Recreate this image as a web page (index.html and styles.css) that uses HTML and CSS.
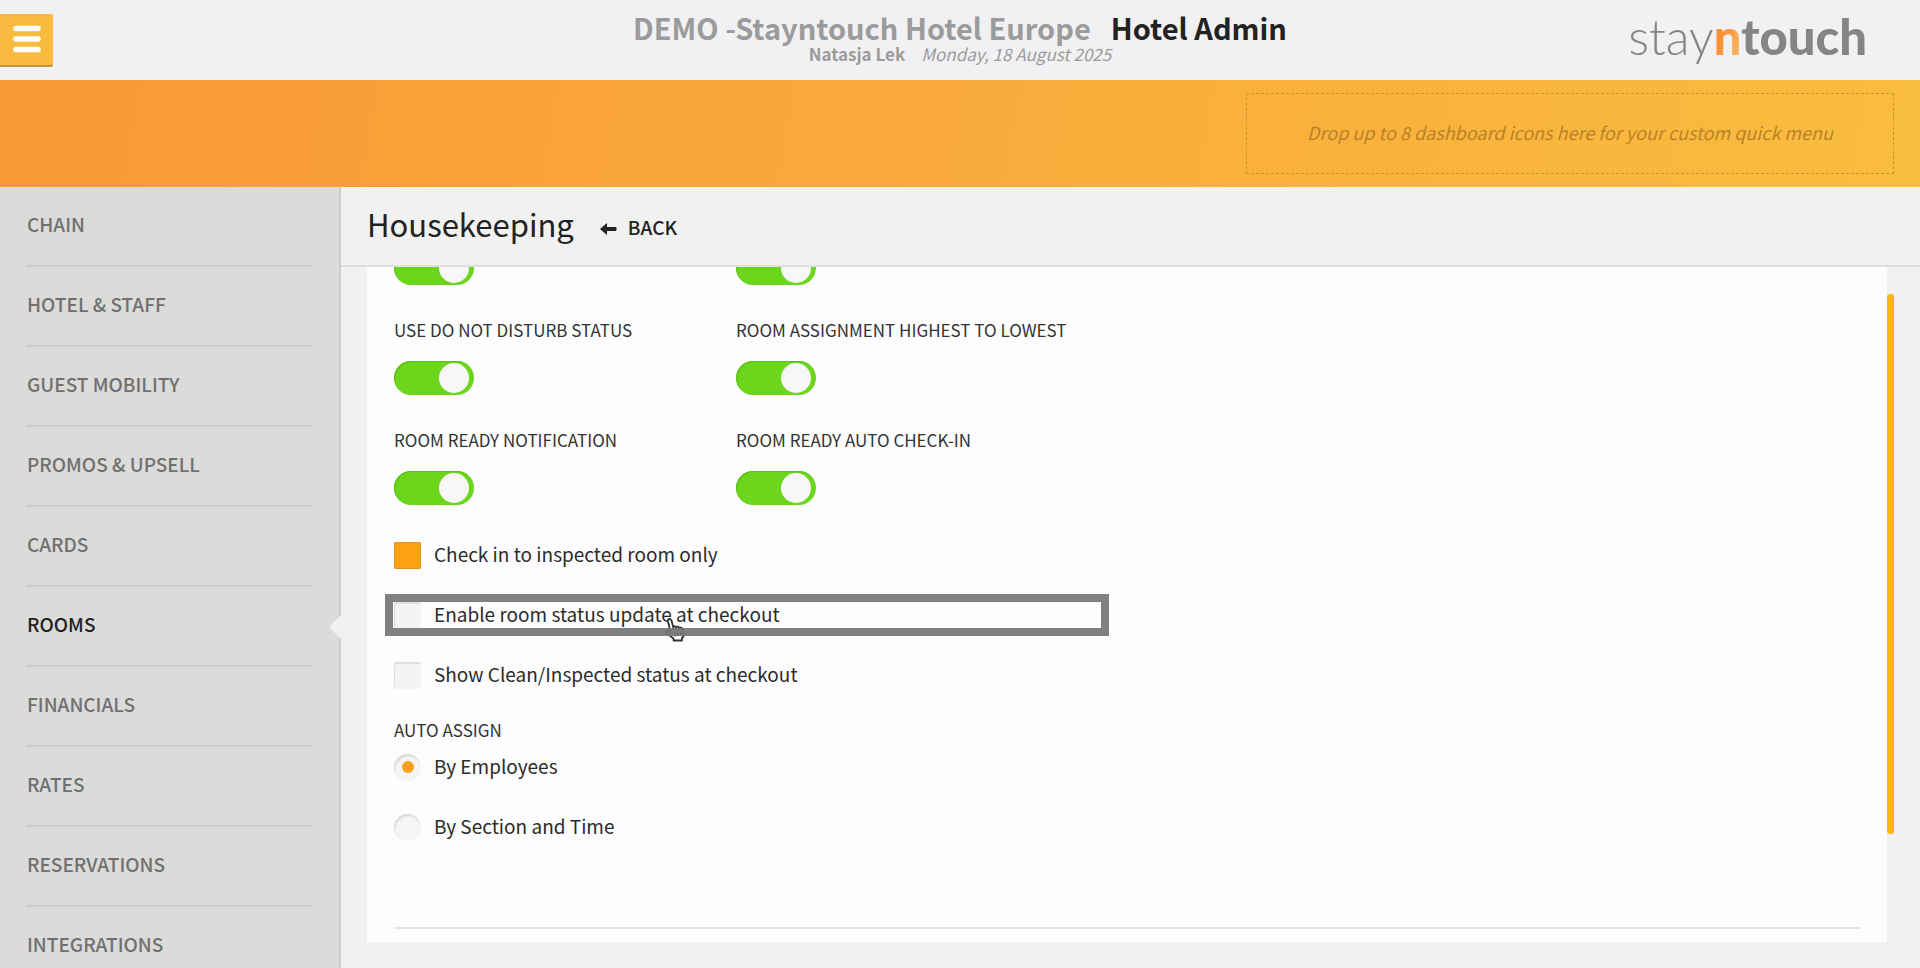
FILE: index.html
```html
<!DOCTYPE html>
<html lang="en">
<head>
<meta charset="utf-8">
<title>Hotel Admin</title>
<link rel="stylesheet" href="styles.css">
</head>
<body>
<div class="app">
  <header class="top">
    <button class="menu-btn" type="button" aria-label="Open menu">
      <svg width="28" height="28" viewBox="0 0 28 28" aria-hidden="true"><path d="M3 3.500h22M3 14h22M3 24.500h22" stroke="#fff" stroke-width="5.500" stroke-linecap="round"/></svg>
    </button>
    <div class="headline">
      <h1 class="hotel"><span class="hotel-name">DEMO -Stayntouch Hotel Europe</span><span>Hotel Admin</span></h1>
      <p class="meta"><b>Natasja Lek</b><i>Monday, 18 August 2025</i></p>
    </div>
    <div class="logo"><span class="logo-thin">stay</span><span class="logo-n">n</span><span class="logo-bold">touch</span></div>
  </header>
  <div class="quick"><div class="drop">Drop up to 8 dashboard icons here for your custom quick menu</div></div>
  <div class="body">
    <nav class="side">
      <a class="side-link" href="#">CHAIN</a>
      <a class="side-link" href="#">HOTEL &amp; STAFF</a>
      <a class="side-link" href="#">GUEST MOBILITY</a>
      <a class="side-link" href="#">PROMOS &amp; UPSELL</a>
      <a class="side-link" href="#">CARDS</a>
      <a class="side-link active" href="#">ROOMS</a>
      <a class="side-link" href="#">FINANCIALS</a>
      <a class="side-link" href="#">RATES</a>
      <a class="side-link" href="#">RESERVATIONS</a>
      <a class="side-link" href="#">INTEGRATIONS</a>
    </nav>
    <main class="main">
      <div class="title-bar">
        <h2 class="title">Housekeeping</h2>
        <a class="back" href="#"><svg class="arrow" width="17" height="12" viewBox="0 0 17 12" aria-hidden="true"><path d="M0 6 7 0v4h8.500q1 0 1 1v2q0 1-1 1H7v4z" fill="#222"/></svg>BACK</a>
      </div>
      <div class="panel-wrap">
        <form class="panel">
          <div class="grid">
            <div class="field"><input class="switch" type="checkbox" checked aria-label="Setting 1"></div>
            <div class="field"><input class="switch" type="checkbox" checked aria-label="Setting 2"></div>
            <div class="field"><label class="label" for="dnd">USE DO NOT DISTURB STATUS</label><input class="switch" id="dnd" type="checkbox" checked></div>
            <div class="field"><label class="label" for="high">ROOM ASSIGNMENT HIGHEST TO LOWEST</label><input class="switch" id="high" type="checkbox" checked></div>
            <div class="field"><label class="label" for="ready">ROOM READY NOTIFICATION</label><input class="switch" id="ready" type="checkbox" checked></div>
            <div class="field"><label class="label" for="auto">ROOM READY AUTO CHECK-IN</label><input class="switch" id="auto" type="checkbox" checked></div>
          </div>
          <div class="options">
            <label class="option"><input class="box" type="checkbox" checked><span class="option-text">Check in to inspected room only</span></label>
            <div class="marked">
              <label class="option"><input class="box" type="checkbox"><span class="option-text">Enable room status update at checkout</span></label>
              <svg class="hand" width="22" height="24" viewBox="0 0 22 24" aria-hidden="true"><path d="M6.500 14 4 3.500Q3.600 1.200 5.200 1T7.500 2.600L9.200 9Q10.500 7 12 9.300 13.800 7.600 15.200 10 17.800 8.800 18.800 11.500L20 15Q20.500 18 18 20V22.500H9.500V20.500L2.500 15Q1.500 13 3.500 12.500Z" fill="#fff" stroke="#333" stroke-width="1.800" stroke-linejoin="round"/><path d="M10.500 14.500l.8 4M13.500 14l.8 4M16.500 13.500l.5 4M9.200 9l.8 3M12 9.300l.7 2.700M15.200 10l.5 2" stroke="#333" stroke-width="1.300"/></svg>
              <div class="frame"></div>
            </div>
            <label class="option"><input class="box" type="checkbox"><span class="option-text">Show Clean/Inspected status at checkout</span></label>
          </div>
          <fieldset class="assign">
            <legend class="label">AUTO ASSIGN</legend>
            <label class="option"><input class="dot" type="radio" name="assign" checked><span class="option-text">By Employees</span></label>
            <label class="option"><input class="dot" type="radio" name="assign"><span class="option-text">By Section and Time</span></label>
          </fieldset>
          <hr class="rule">
        </form>
        <div class="thumb"></div>
      </div>
    </main>
  </div>
</div>
</body>
</html>
```
FILE: styles.css
```css
* { box-sizing: border-box; }
body {
  margin: 0;
  font-family: "Noto Sans CJK JP", "Noto Sans", sans-serif;
  color: #222;
  background: #f1f1f1;
}
.app { height: 100vh; display: flex; flex-direction: column; overflow: hidden; }
.top {
  flex: none; height: 80px; background: #f1f1f3;
  display: grid; grid-template-columns: 1fr auto 1fr; align-items: center;
}
.menu-btn {
  width: 53px; height: 53px; border: 0; border-bottom: 2px solid #c2953a;
  border-radius: 0 2px 2px 0; background: #f8bb40; padding: 0 0 0 13px;
  display: flex; align-items: center;
}
.headline { text-align: center; white-space: nowrap; padding-bottom: 7px; }
.hotel { margin: 0; font-size: 29px; line-height: 34px; font-weight: 700; display: flex; gap: 20px; }
.hotel-name { color: #9b9b9b; }
.meta { margin: 0; font-size: 17px; line-height: 20px; color: #9b9b9b; display: flex; justify-content: center; gap: 16px; }
.meta i { font-weight: 400; }
.logo { justify-self: end; margin-right: 53px; padding-bottom: 8px; font-family: Lato, sans-serif; font-size: 49px; line-height: 60px; color: #858585; }
.logo-thin { font-weight: 300; }
.logo-n, .logo-bold { font-weight: 900; }
.logo-n { color: transparent; background: linear-gradient(110deg, #fa8f33 40%, #f9c477); background-clip: text; -webkit-background-clip: text; }
.quick {
  flex: none; height: 107px; padding: 13px 26px; display: flex; justify-content: flex-end;
  background: linear-gradient(100deg, #f99837, #f9bd3e);
}
.drop {
  width: 648px; border: 1px dashed #cf922c; display: flex; align-items: center; justify-content: center;
  padding-bottom: 3px; font-size: 18px; font-style: italic; color: #b98228;
}
.body { flex: 1; min-height: 0; display: flex; }
.side { flex: none; width: 341px; padding: 0 28px 0 26px; background: #dbdbda; border-right: 2px solid #cdcdcd; }
.side-link {
  position: relative; display: flex; align-items: center; height: 80px; padding: 0 0 5px 1px; border-bottom: 2px solid #cbcbca;
  font-size: 19px; font-weight: 500; color: #707070; text-decoration: none;
}
.active { color: #222; }
.active::after {
  content: ""; position: absolute; right: -30px; top: 28px;
  border: 12px solid transparent; border-left: 0; border-right-color: #f1f1f1;
}
.main { flex: 1; min-width: 0; display: flex; flex-direction: column; }
.title-bar { flex: none; height: 80px; padding: 0 27px 4px 26px; border-bottom: 2px solid #dfdfdf; display: flex; align-items: center; gap: 26px; }
.title { margin: 0; font-size: 31px; font-weight: 400; line-height: 40px; }
.back { display: flex; align-items: center; gap: 11px; padding-top: 5px; font-size: 19px; font-weight: 500; color: #222; text-decoration: none; }
.arrow { margin-top: 4px; }
.panel-wrap { position: relative; flex: 1; min-height: 0; padding: 0 33px 26px 26px; display: flex; }
.panel { flex: 1; overflow: hidden; background: #fdfdfd; padding: 0 27px; display: flex; flex-direction: column; justify-content: flex-end; }
.grid { display: grid; grid-template-columns: 342px 342px; row-gap: 32px; }
.field { display: flex; flex-direction: column; gap: 18px; }
.label { font-size: 17px; line-height: 26px; padding: 0; white-space: nowrap; color: #333; }
.switch {
  appearance: none; margin: 0; width: 80px; height: 34px; border-radius: 17px; background: #6cd61d;
  padding: 2px 5px; display: flex; justify-content: flex-end; box-shadow: inset 1px 1px 1px #5cbd18;
}
.switch::after { content: ""; width: 30px; height: 30px; border-radius: 50%; background: #f7f7f7; }
.options { margin-top: 36px; display: flex; flex-direction: column; gap: 32px; }
.option { display: flex; align-items: center; gap: 13px; height: 28px; font-size: 19px; color: #2c2c2c; }
.option-text { padding-bottom: 4px; }
.box { appearance: none; margin: 0; width: 27px; height: 27px; border-radius: 2px; background: #f4f4f4; box-shadow: inset 1px 2px 1px #dedede; }
.box:checked { background: #fea215; box-shadow: inset 0 0 1px 1px #e0921c; }
.marked { position: relative; }
.frame { position: absolute; left: -9px; top: -7px; width: 724px; height: 42px; border: 8px solid rgba(116, 117, 118, 0.92); }
.hand { position: absolute; left: 270px; top: 17px; }
.assign { border: 0; margin: 28px 0 0; padding: 0; display: flex; flex-direction: column; }
.assign .label { margin-bottom: 10px; }
.assign .option + .option { margin-top: 32px; }
.dot {
  appearance: none; margin: 0; width: 27px; height: 27px; border-radius: 50%; background: #f5f5f5;
  box-shadow: inset 1px 2px 2px #d8d8d8; display: grid; place-items: center;
}
.dot:checked::after { content: ""; width: 12px; height: 12px; border-radius: 50%; background: #f9a01b; }
.rule { width: 100%; margin: 86px 0 13px; border: 0; border-top: 2px solid #e6e6e6; flex: none; }
.thumb { position: absolute; right: 26px; top: 27px; width: 7px; height: 77%; border-radius: 3px; background: #fdb41c; }
```
